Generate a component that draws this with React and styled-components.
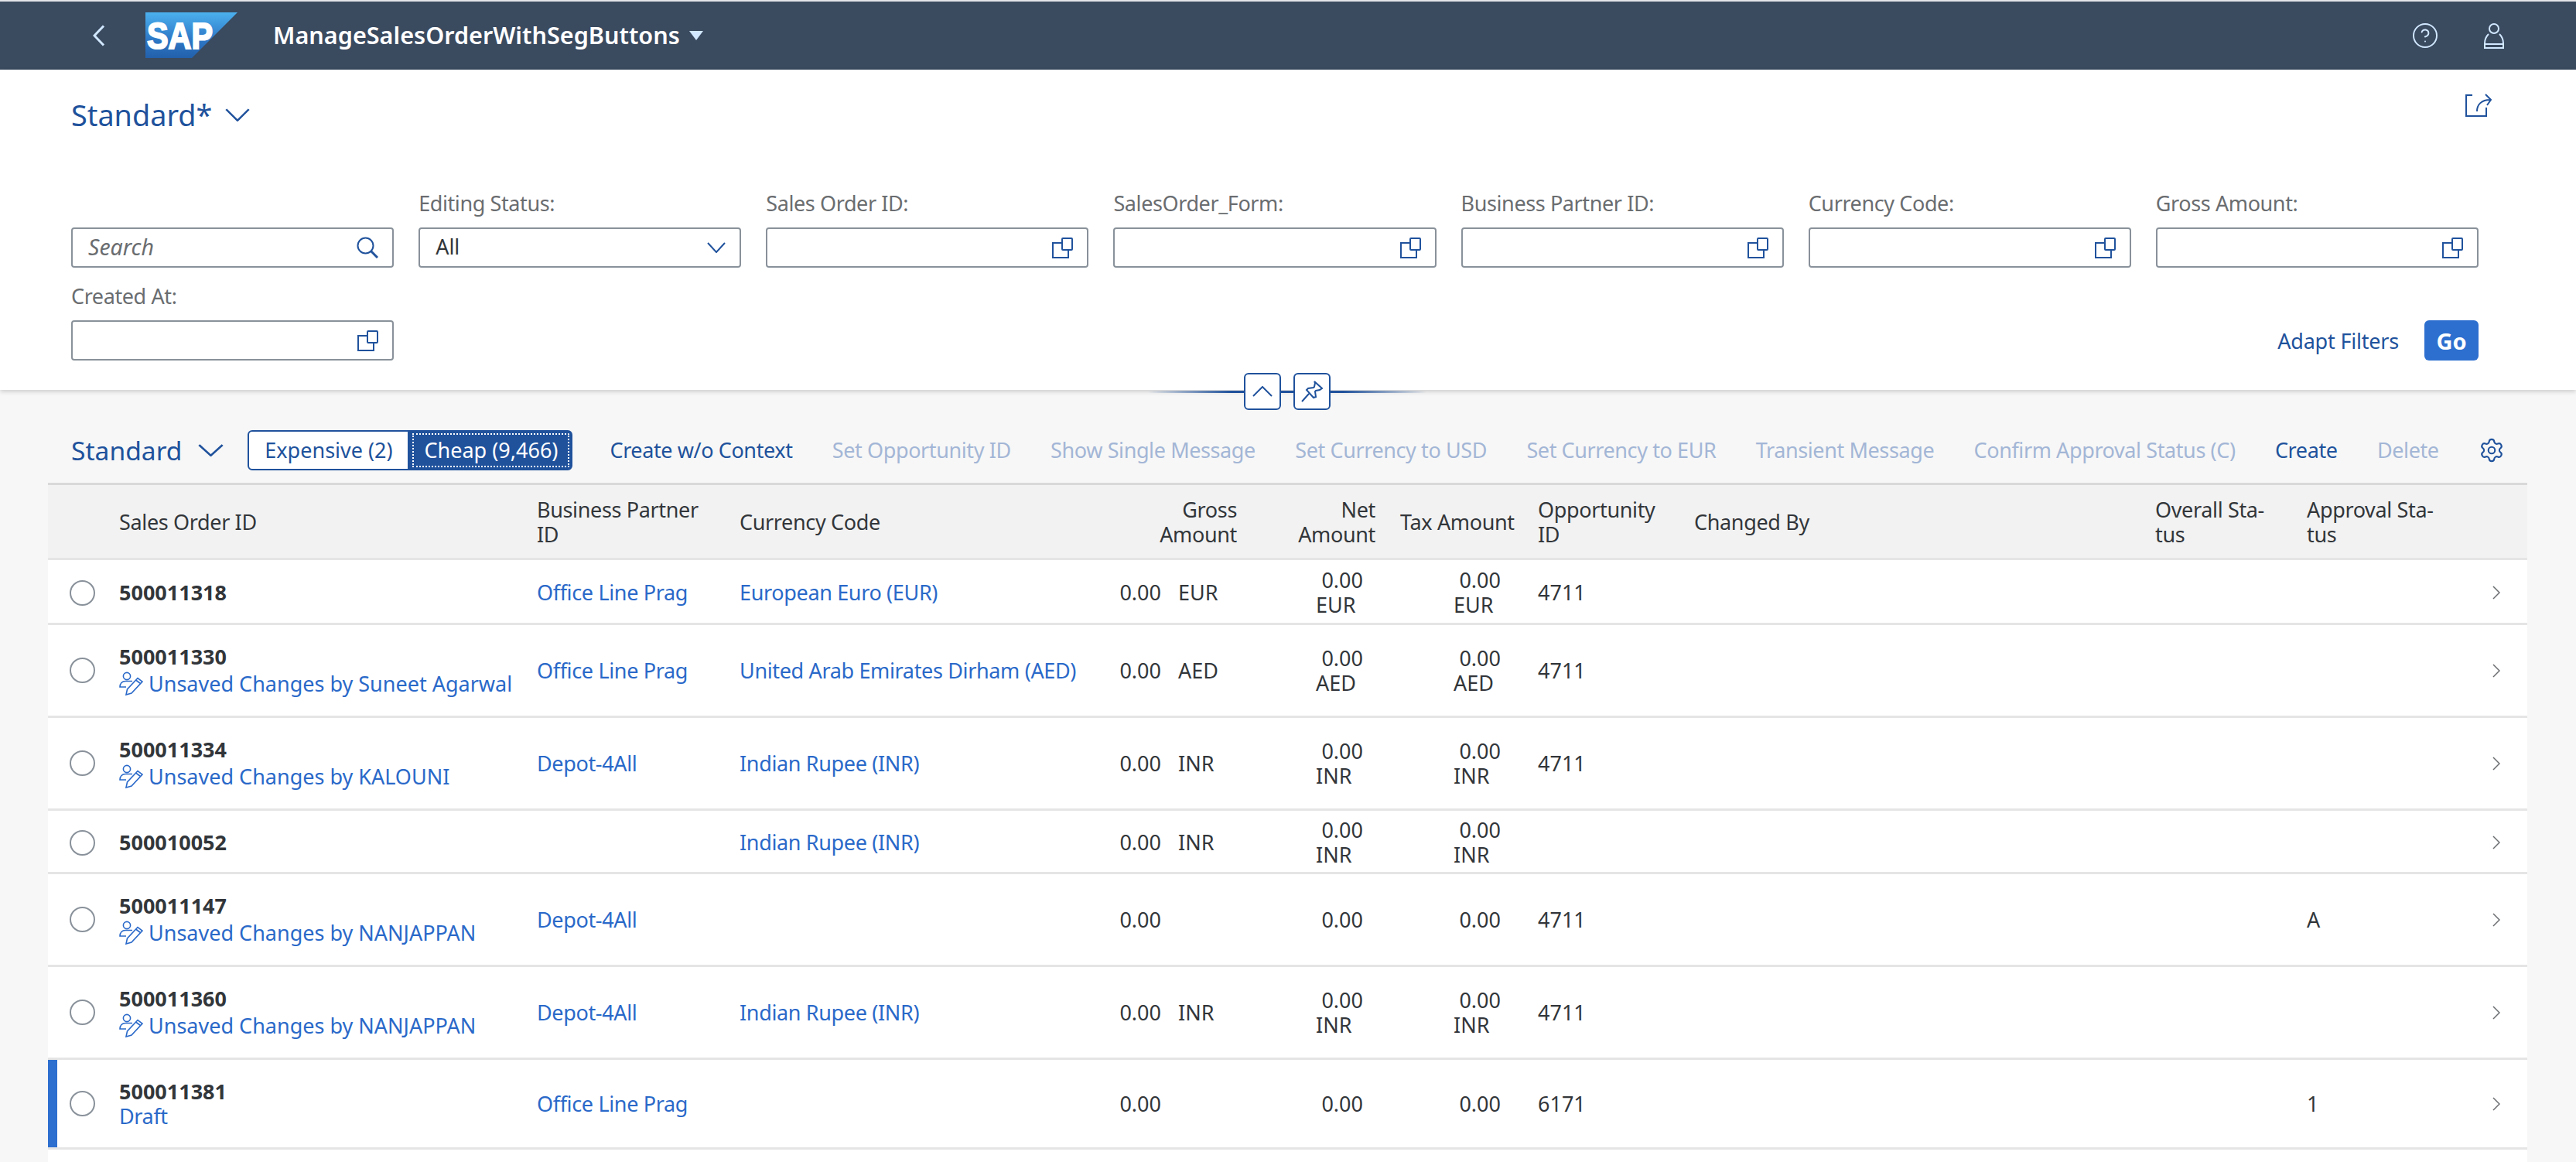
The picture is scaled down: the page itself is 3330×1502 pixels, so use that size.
import React from "react";
import styled, { createGlobalStyle } from "styled-components";
import { Settings, CircleHelp } from "lucide-react";

const blue = "#20529c";
const link = "#2a69c9";
const text = "#32363a";
const font = `"Noto Sans", "Liberation Sans", sans-serif`;

const Global = createGlobalStyle`
  html, body { margin: 0; padding: 0; background: #f7f7f7; }
  body { font-family: ${font}; color: ${text}; }
  * { box-sizing: border-box; }
`;

const Page = styled.div`
  width: 3330px;
  height: 1502px;
  overflow: hidden;
  display: flex;
  flex-direction: column;
`;

/* shell bar */
const Shell = styled.header`
  height: 90px;
  border-top: 2px solid #e3e5e8;
  background: #3a4a5f;
  display: flex;
  align-items: center;
  padding: 0 93px 0 120px;
  flex: none;
`;
const Logo = styled.svg`
  margin-left: 52px;
  margin-top: -2px;
  flex: none;
`;
const AppTitle = styled.div`
  margin-left: 46px;
  margin-top: -2px;
  font-size: 30.6px;
  font-weight: 600;
  color: #fff;
  white-space: nowrap;
`;
const Caret = styled.svg`
  margin-left: 12px;
  flex: none;
`;
const ShellRight = styled.div`
  margin-left: auto;
  display: flex;
  align-items: center;
  gap: 58px;
  color: #d1e8ff;
`;

/* filter panel */
const FilterPanel = styled.section`
  position: relative;
  flex: none;
  height: 414px;
  background: #fff;
  padding: 28px 126px 0 92px;
  box-shadow: 0 2px 6px rgba(0, 0, 0, 0.18);
  z-index: 1;
`;
const ViewRow = styled.div`
  height: 60px;
  display: flex;
  align-items: center;
  justify-content: space-between;
`;
const ViewName = styled.div`
  display: flex;
  align-items: center;
  gap: ${(p) => p.$gap}px;
  color: ${blue};
  font-size: ${(p) => p.$size}px;
  white-space: nowrap;
`;
const ShareIcon = styled.svg`
  align-self: flex-start;
  margin: 2px -17px 0 0;
`;
const FilterGrid = styled.div`
  margin-top: 72px;
  display: grid;
  grid-template-columns: repeat(7, 1fr);
  column-gap: 32px;
  row-gap: 24px;
`;
const Field = styled.div`
  display: flex;
  flex-direction: column;
  justify-content: flex-end;
`;
const Label = styled.label`
  height: 30px;
  line-height: 26px;
  margin-bottom: 14px;
  font-size: 27px;
  letter-spacing: -0.4px;
  color: #6a6d70;
  white-space: nowrap;
`;
const Input = styled.div`
  height: 52px;
  border: 2px solid #89919a;
  border-radius: 4px;
  background: #fff;
  display: flex;
  align-items: center;
  justify-content: space-between;
  padding: 0 18px 0 20px;
  font-size: 27px;
  line-height: 44px;
  color: ${text};
`;
const InputText = styled.span`
  margin-top: -2px;
`;
const Placeholder = styled(InputText)`
  font-size: 28.5px;
  font-style: italic;
  color: #6a6d70;
`;
const Actions = styled.div`
  grid-column: 6 / 8;
  display: flex;
  justify-content: flex-end;
  align-items: center;
  align-self: end;
  height: 52px;
  gap: 33px;
`;
const TextButton = styled.span`
  color: ${blue};
  font-size: 27px;
  letter-spacing: -0.2px;
  white-space: nowrap;
`;
const GoButton = styled.span`
  width: 70px;
  height: 52px;
  border-radius: 6px;
  background: #2d6fcf;
  color: #fff;
  font-size: 29px;
  font-weight: 700;
  display: flex;
  align-items: center;
  justify-content: center;
`;

/* collapse handle sits over the panel edge */
const Handle = styled.div`
  position: absolute;
  left: 1484px;
  bottom: -26px;
  width: 360px;
  height: 48px;
  display: flex;
  justify-content: center;
  gap: 16px;
  z-index: 2;
  &::before {
    content: "";
    position: absolute;
    left: 0;
    right: 0;
    top: 23px;
    height: 3px;
    background: linear-gradient(90deg, transparent, ${blue} 30%, ${blue} 70%, transparent);
  }
`;
const HandleButton = styled.div`
  position: relative;
  width: 48px;
  height: 48px;
  border: 2px solid ${blue};
  border-radius: 6px;
  background: #fff;
  display: flex;
  align-items: center;
  justify-content: center;
`;

/* table toolbar */
const Toolbar = styled.div`
  height: 120px;
  flex: none;
  display: flex;
  align-items: center;
  padding: 35px 92px 0 92px;
`;
const Segmented = styled.div`
  margin-left: 31px;
  display: flex;
  height: 52px;
  flex: none;
`;
const Segment = styled.div`
  height: 52px;
  width: ${(p) => p.$w}px;
  display: flex;
  align-items: center;
  justify-content: center;
  font-size: 27px;
  white-space: nowrap;
  border: 2px solid ${blue};
  background: ${(p) => (p.$on ? blue : "#fff")};
  color: ${(p) => (p.$on ? "#fff" : blue)};
  border-radius: ${(p) => (p.$on ? "0 6px 6px 0" : "6px 0 0 6px")};
  outline: ${(p) => (p.$on ? "2px dotted #fff" : "none")};
  outline-offset: -6px;
`;
const ToolbarButtons = styled.div`
  margin-left: 48px;
  flex: 1;
  display: flex;
  align-items: center;
  justify-content: space-between;
`;
const ToolButton = styled.span`
  font-size: 27px;
  letter-spacing: -0.4px;
  white-space: nowrap;
  color: ${(p) => (p.$off ? "#a3b6d6" : blue)};
`;

/* table */
const Table = styled.div`
  flex: 1;
  margin: 0 63px 0 62px;
  background: #fff;
  display: flex;
  flex-direction: column;
`;
const columns = "76px 540px 262px 490px 185px 179px 178px 202px 596px 196px 224px 77px";
const HeadRow = styled.div`
  height: 100px;
  flex: none;
  display: grid;
  grid-template-columns: ${columns};
  align-items: center;
  background: #f2f2f2;
  border-top: 3px solid #d9d9d9;
  border-bottom: 3px solid #e5e5e5;
  padding-top: 1px;
`;
const HeadCell = styled.div`
  padding: 0 16px;
  font-size: 27px;
  line-height: 32px;
  letter-spacing: -0.35px;
  white-space: nowrap;
  color: ${text};
  text-align: ${(p) => (p.$right ? "right" : "left")};
`;
const Row = styled.div`
  position: relative;
  height: ${(p) => p.$h}px;
  flex: none;
  display: grid;
  grid-template-columns: ${columns};
  align-items: center;
  border-bottom: 3px solid #e5e5e5;
  padding-top: ${(p) => (p.$h < 100 ? 3 : 0)}px;
  font-size: 27px;
  line-height: 32px;
`;
const Strip = styled.div`
  position: absolute;
  left: 0;
  top: 0;
  bottom: 0;
  width: 12px;
  background: #2d6fcf;
`;
const Radio = styled.div`
  width: 33px;
  height: 33px;
  margin-left: 28px;
  border: 2px solid #89919a;
  border-radius: 50%;
  background: #fff;
`;
const Cell = styled.div`
  padding: 0 16px;
  white-space: nowrap;
`;
const OrderId = styled.div`
  font-weight: 700;
  color: ${text};
`;
const Status = styled.div`
  color: ${link};
  display: flex;
  align-items: center;
  gap: 6px;
  line-height: 35px;
  margin-top: 1px;
`;
const Link = styled.span`
  color: ${link};
  letter-spacing: -0.35px;
`;
const GrossAmount = styled.div`
  display: flex;
  justify-content: flex-end;
  padding: 0 16px;
`;
const GrossUnit = styled.span`
  width: 76px;
  margin-left: 22px;
`;
const Stacked = styled.div`
  width: 61px;
  margin: 0 32px 0 auto;
`;
const StackedNum = styled.div`
  text-align: right;
`;
const Chevron = styled.svg`
  margin-left: 32px;
`;
const Filler = styled.div`
  flex: 1;
`;

const CopyIcon = () => (
  <svg width="27" height="27" viewBox="0 0 27 27" fill="none" stroke={blue} strokeWidth="2">
    <rect x="13" y="1" width="13" height="15" rx="1" />
    <path d="M12 7H1v19h20V17" />
  </svg>
);
const SearchIcon = () => (
  <svg width="28" height="28" viewBox="0 0 28 28" fill="none" stroke={blue} strokeWidth="2">
    <circle cx="11.5" cy="11.5" r="10" />
    <path d="M18.5 18.5L27 27" strokeWidth="3" />
  </svg>
);
const DownIcon = ({ w = 24, h = 14 }) => (
  <svg width={w} height={h} viewBox="0 0 24 14" fill="none" stroke={blue} strokeWidth="2" preserveAspectRatio="none">
    <path d="M1 1l11 12L23 1" />
  </svg>
);
const PersonEdit = () => (
  <svg width="32" height="31" viewBox="0 0 32 31" fill="none" stroke={link} strokeWidth="1.6" style={{ flex: "none" }}>
    <circle cx="10" cy="6" r="4.600" />
    <path d="M17 12.500H8c-4 0-7 3-7 7.500h8" />
    <path d="M9 30l1.500-7L24 8.500l6 4.500L16 28zM21.500 11l6 4.500" />
  </svg>
);

const buttons = [
  ["Create w/o Context", false],
  ["Set Opportunity ID", true],
  ["Show Single Message", true],
  ["Set Currency to USD", true],
  ["Set Currency to EUR", true],
  ["Transient Message", true],
  ["Confirm Approval Status (C)", true],
  ["Create", false],
  ["Delete", true],
];

const fields = ["Sales Order ID:", "SalesOrder_Form:", "Business Partner ID:", "Currency Code:", "Gross Amount:"];

const rows = [
  { h: 84, id: "500011318", bp: "Office Line Prag", cur: "European Euro (EUR)", unit: "EUR", opp: "4711" },
  { h: 120, id: "500011330", who: "Suneet Agarwal", bp: "Office Line Prag", cur: "United Arab Emirates Dirham (AED)", unit: "AED", opp: "4711" },
  { h: 120, id: "500011334", who: "KALOUNI", bp: "Depot-4All", cur: "Indian Rupee (INR)", unit: "INR", opp: "4711" },
  { h: 82, id: "500010052", cur: "Indian Rupee (INR)", unit: "INR" },
  { h: 120, id: "500011147", who: "NANJAPPAN", bp: "Depot-4All", opp: "4711", appr: "A" },
  { h: 120, id: "500011360", who: "NANJAPPAN", bp: "Depot-4All", cur: "Indian Rupee (INR)", unit: "INR", opp: "4711" },
  { h: 116, id: "500011381", draft: true, bp: "Office Line Prag", opp: "6171", appr: "1" },
];

const Stack = ({ unit }) => (
  <Stacked>
    <StackedNum>0.00</StackedNum>
    {unit && <div>{unit}</div>}
  </Stacked>
);

export default function App() {
  return (
    <Page>
      <Global />
      <Shell>
        <svg width="16" height="28" viewBox="0 0 16 28" fill="none" stroke="#d1e8ff" strokeWidth="3" style={{ flex: "none" }}>
          <path d="M14 1.500L2 14l12 12.500" />
        </svg>
        <Logo width="119" height="59" viewBox="0 0 119 59">
          <defs>
            <linearGradient id="sapFill" x1="0" y1="0" x2="0" y2="1">
              <stop offset="0" stopColor="#4bb0ee" />
              <stop offset="0.6" stopColor="#2e78c6" />
              <stop offset="1" stopColor="#2260ab" />
            </linearGradient>
          </defs>
          <polygon points="0,0 119,0 60,59 0,59" fill="url(#sapFill)" />
          <text x="2" y="47" fontFamily="Liberation Sans" fontWeight="700" fontSize="49" stroke="#fff" strokeWidth="2.2" fill="#fff" textLength="85" lengthAdjust="spacingAndGlyphs">
            SAP
          </text>
        </Logo>
        <AppTitle>ManageSalesOrderWithSegButtons</AppTitle>
        <Caret width="18" height="12" viewBox="0 0 18 12">
          <polygon points="0,0 18,0 9,12" fill="#d1e8ff" />
        </Caret>
        <ShellRight>
          <CircleHelp size={36} strokeWidth={1.3} />
          <svg width="26" height="33" viewBox="0 0 26 33" fill="none" stroke="#d1e8ff" strokeWidth="2">
            <circle cx="13" cy="7" r="6" />
            <path d="M6 14c-3 3-5 7-5 12v6h24v-6c0-5-2-9-5-12" />
            <path d="M1 27h24" />
          </svg>
        </ShellRight>
      </Shell>

      <FilterPanel>
        <ViewRow>
          <ViewName $size={37.8} $gap={17}>
            Standard*
            <DownIcon w={32} h={17} />
          </ViewName>
          <ShareIcon width="34" height="32" viewBox="0 0 34 32" fill="none" stroke={blue} strokeWidth="2">
            <path d="M9 3H1v27h26V19" />
            <path d="M15 24c0-9 6-15 17-15M26 2l7 7-5 7" />
          </ShareIcon>
        </ViewRow>
        <FilterGrid>
          <Field>
            <Input>
              <Placeholder>Search</Placeholder>
              <SearchIcon />
            </Input>
          </Field>
          <Field>
            <Label>Editing Status:</Label>
            <Input>
              <InputText>All</InputText>
              <DownIcon />
            </Input>
          </Field>
          {fields.map((f) => (
            <Field key={f}>
              <Label>{f}</Label>
              <Input>
                <span />
                <CopyIcon />
              </Input>
            </Field>
          ))}
          <Field>
            <Label>Created At:</Label>
            <Input>
              <span />
              <CopyIcon />
            </Input>
          </Field>
          <Actions>
            <TextButton>Adapt Filters</TextButton>
            <GoButton>Go</GoButton>
          </Actions>
        </FilterGrid>
        <Handle>
          <HandleButton>
            <svg width="26" height="14" viewBox="0 0 26 14" fill="none" stroke={blue} strokeWidth="2">
              <path d="M1 13L13 1l12 12" />
            </svg>
          </HandleButton>
          <HandleButton>
            <svg width="28" height="28" viewBox="0 0 28 28" fill="none" stroke={blue} strokeWidth="2">
              <path d="M17 1l10 9-3 2-5 1-1 1 1 7-3 1-9-10 2-2 7-1 1-1 1-5zM10 17L1 27" />
            </svg>
          </HandleButton>
        </Handle>
      </FilterPanel>

      <Toolbar>
        <ViewName $size={33.6} $gap={21}>
          Standard
          <DownIcon w={33} h={16} />
        </ViewName>
        <Segmented>
          <Segment $w={209}>Expensive (2)</Segment>
          <Segment $w={211} $on>Cheap (9,466)</Segment>
        </Segmented>
        <ToolbarButtons>
          {buttons.map(([label, off]) => (
            <ToolButton key={label} $off={off}>{label}</ToolButton>
          ))}
          <Settings size={34} strokeWidth={1.5} color={blue} />
        </ToolbarButtons>
      </Toolbar>

      <Table>
        <HeadRow>
          <span />
          <HeadCell>Sales Order ID</HeadCell>
          <HeadCell>Business Partner<br />ID</HeadCell>
          <HeadCell>Currency Code</HeadCell>
          <HeadCell $right>Gross<br />Amount</HeadCell>
          <HeadCell $right>Net<br />Amount</HeadCell>
          <HeadCell $right>Tax Amount</HeadCell>
          <HeadCell>Opportunity<br />ID</HeadCell>
          <HeadCell>Changed By</HeadCell>
          <HeadCell>Overall Sta-<br />tus</HeadCell>
          <HeadCell>Approval Sta-<br />tus</HeadCell>
          <span />
        </HeadRow>
        {rows.map((r) => (
          <Row key={r.id} $h={r.h}>
            {r.draft && <Strip />}
            <Radio />
            <Cell>
              <OrderId>{r.id}</OrderId>
              {r.who && (
                <Status>
                  <PersonEdit />
                  Unsaved Changes by {r.who}
                </Status>
              )}
              {r.draft && <Link>Draft</Link>}
            </Cell>
            <Cell><Link>{r.bp}</Link></Cell>
            <Cell><Link>{r.cur}</Link></Cell>
            <GrossAmount>
              0.00
              <GrossUnit>{r.unit}</GrossUnit>
            </GrossAmount>
            <Stack unit={r.unit} />
            <Stack unit={r.unit} />
            <Cell>{r.opp}</Cell>
            <span />
            <span />
            <Cell>{r.appr}</Cell>
            <Chevron width="10" height="18" viewBox="0 0 10 18" fill="none" stroke="#6a6d70" strokeWidth="1.5">
              <path d="M1 1l8 8-8 8" />
            </Chevron>
          </Row>
        ))}
        <Filler />
      </Table>
    </Page>
  );
}
